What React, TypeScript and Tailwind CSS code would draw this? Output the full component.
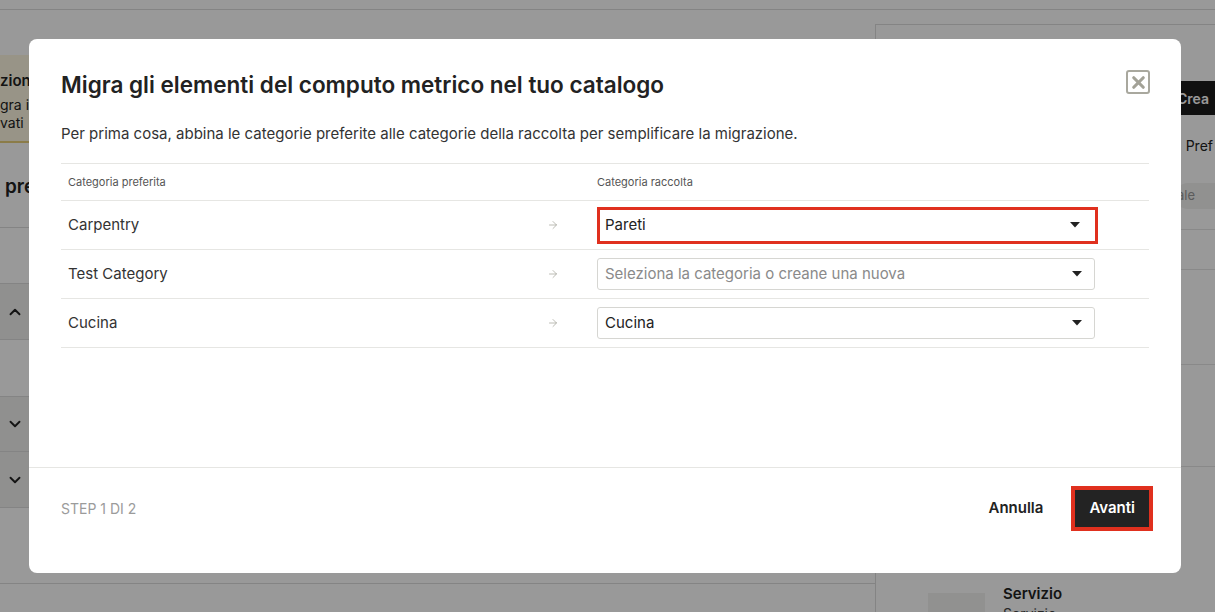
import { ArrowRight, ChevronDown, ChevronUp, X } from 'lucide-react';

const font = { fontFamily: 'Inter, "Noto Sans", sans-serif' };

type Row = { name: string; value: string; placeholder?: boolean; flagged?: boolean };

const rows: Row[] = [
  { name: 'Carpentry', value: 'Pareti', flagged: true },
  { name: 'Test Category', value: 'Seleziona la categoria o creane una nuova', placeholder: true },
  { name: 'Cucina', value: 'Cucina' },
];

/* ── Caret used by the selects ── */
function Caret() {
  return (
    <svg width="10" height="6" viewBox="0 0 10 6" className="shrink-0">
      <path d="M0 0h10L5 5.5z" fill="#222" />
    </svg>
  );
}

/* ── Category select ── */
function CategorySelect({ row }: { row: Row }) {
  if (row.flagged) {
    return (
      <div className="w-[501px] h-[37px] border-[3px] border-[#e0301e] bg-white flex items-center justify-between pl-[5px] pr-[15px]">
        <span className="text-[15px] text-[#222]">{row.value}</span>
        <Caret />
      </div>
    );
  }
  return (
    <div className="w-[498px] h-[32px] border border-[#d6d6d2] rounded-[3px] bg-white flex items-center justify-between pl-[7px] pr-[12px]">
      <span className={`text-[15px] ${row.placeholder ? 'text-[#8a8a8a]' : 'text-[#222]'}`}>{row.value}</span>
      <Caret />
    </div>
  );
}

/* ── Page behind the dialog ── */
function Page() {
  return (
    <div className="w-[1215px] h-[612px] bg-white overflow-hidden flex flex-col">
      <div className="h-[10px] border-b border-[#dcdcdc] shrink-0" />
      <div className="flex flex-1">
        {/* main column */}
        <div className="w-[875px] flex flex-col">
          <div className="h-[45px]" />
          <div className="h-[88px] bg-[#fdf7e1] border-b-2 border-[#e8cf7a] text-[#222] pt-[16px]">
            <p className="w-[29px] overflow-hidden whitespace-nowrap text-[15px] font-semibold leading-5">zione</p>
            <p className="w-[29px] overflow-hidden whitespace-nowrap text-[14px] leading-[18px] mt-[5px]">gra i</p>
            <p className="w-[29px] overflow-hidden whitespace-nowrap text-[14px] leading-[18px]">vati</p>
          </div>
          <div className="h-[85px] border-b border-[#dcdcdc] flex items-center pl-[5px] pt-[4px]">
            <span className="w-[24px] overflow-hidden whitespace-nowrap text-[19px] font-semibold text-[#222]">prev</span>
          </div>
          <div className="h-[55px]" />
          <div className="h-[57px] bg-[#f0f0ee] border-y border-[#dcdcdc] flex items-center pl-[6px]">
            <ChevronUp size={18} strokeWidth={2.5} className="text-[#222]" />
          </div>
          <div className="h-[56px]" />
          <div className="h-[56px] bg-[#f0f0ee] border-y border-[#dcdcdc] flex items-center pl-[6px]">
            <ChevronDown size={18} strokeWidth={2.5} className="text-[#222]" />
          </div>
          <div className="h-[56px] bg-[#f0f0ee] border-b border-[#dcdcdc] flex items-center pl-[6px]">
            <ChevronDown size={18} strokeWidth={2.5} className="text-[#222]" />
          </div>
          <div className="h-[75px]" />
          <div className="border-b border-[#dcdcdc]" />
        </div>
        {/* right panel */}
        <div className="flex-1 mt-[14px] border-l border-t border-[#dcdcdc] flex flex-col">
          <div className="h-[56px]" />
          <div className="flex justify-end">
            <div className="w-[66px] h-[34px] bg-[#1c1c1c] text-white text-[14px] font-semibold flex items-center pl-[28px]">Crea</div>
          </div>
          <div className="flex justify-end items-center gap-[6px] mt-[20px] pr-[2px]">
            <span className="w-[14px] h-[14px] rounded-full border border-[#333]" />
            <span className="text-[14px] text-[#222]">Pref</span>
          </div>
          <div className="flex justify-end mt-[27px]">
            <div className="h-[26px] w-[40px] rounded-l-full bg-[#f2f2f0] text-[13px] text-[#999] flex items-center pl-[2px]">ale</div>
          </div>
          <div className="border-b border-[#e4e4e4] mt-[20px]" />
          <div className="h-[40px] border-b border-[#e4e4e4]" />
          <div className="h-[95px] border-b border-[#e4e4e4]" />
          <div className="h-[102px] border-b border-[#e4e4e4]" />
          <div className="flex gap-[18px] pl-[52px] pt-[117px]">
            <div className="w-[57px] h-[40px] mt-[9px] bg-[#f2f2f0]" />
            <div className="flex flex-col">
              <span className="text-[15px] font-semibold text-[#222] leading-5">Servizio</span>
              <span className="text-[14px] text-[#444] leading-5">Servizio</span>
            </div>
          </div>
        </div>
      </div>
    </div>
  );
}

/* ── Migration dialog ── */
function MigrationDialog() {
  return (
    <div className="absolute left-[29px] top-[39px] w-[1152px] h-[534px] bg-white rounded-[8px] flex flex-col">
      <div className="px-8 pt-8">
        <div className="flex items-start justify-between">
          <h2 className="text-[22.5px] leading-7 font-semibold text-[#222]">
            Migra gli elementi del computo metrico nel tuo catalogo
          </h2>
          <button className="w-[24px] h-[24px] mr-[-1px] mt-[-1px] border-2 border-[#a9a89e] rounded-[3px] flex items-center justify-center text-[#a3a297]">
            <X size={19} strokeWidth={4} />
          </button>
        </div>
        <p className="mt-[25px] text-[15px] leading-5 text-[#333]">
          Per prima cosa, abbina le categorie preferite alle categorie della raccolta per semplificare la migrazione.
        </p>

        <div className="mt-[19px] border-t border-[#e6e6e3]">
          <div className="h-[37px] border-b border-[#e6e6e3] flex items-center text-[11px] text-[#555]">
            <span className="w-[536px] pl-[7px]">Categoria preferita</span>
            <span>Categoria raccolta</span>
          </div>
          {rows.map((row) => (
            <div key={row.name} className="h-[49px] border-b border-[#e6e6e3] flex items-center">
              <span className="w-[486px] pl-[7px] text-[15px] text-[#333]">{row.name}</span>
              <ArrowRight size={12} strokeWidth={1.5} className="text-[#a6a69c]" />
              <span className="w-[38px]" />
              <CategorySelect row={row} />
            </div>
          ))}
        </div>
      </div>

      <div className="flex-1" />

      <div className="border-t border-[#e6e6e3] h-[106px] px-8">
        <div className="h-[80px] flex items-center justify-between">
          <span className="text-[14px] text-[#9b9b9b] uppercase">Step 1 di 2</span>
          <div className="flex items-center gap-8">
            <button className="text-[15px] font-semibold text-[#222]">Annulla</button>
            <button className="h-[37px] px-[14px] bg-[#232323] text-white text-[15px] font-semibold outline-4 outline-[#e0301e]">
              Avanti
            </button>
          </div>
        </div>
      </div>
    </div>
  );
}

export default function App() {
  return (
    <div className="relative w-[1215px] h-[612px] overflow-hidden" style={font}>
      <Page />
      <div className="absolute inset-0 bg-black/40" />
      <MigrationDialog />
    </div>
  );
}
